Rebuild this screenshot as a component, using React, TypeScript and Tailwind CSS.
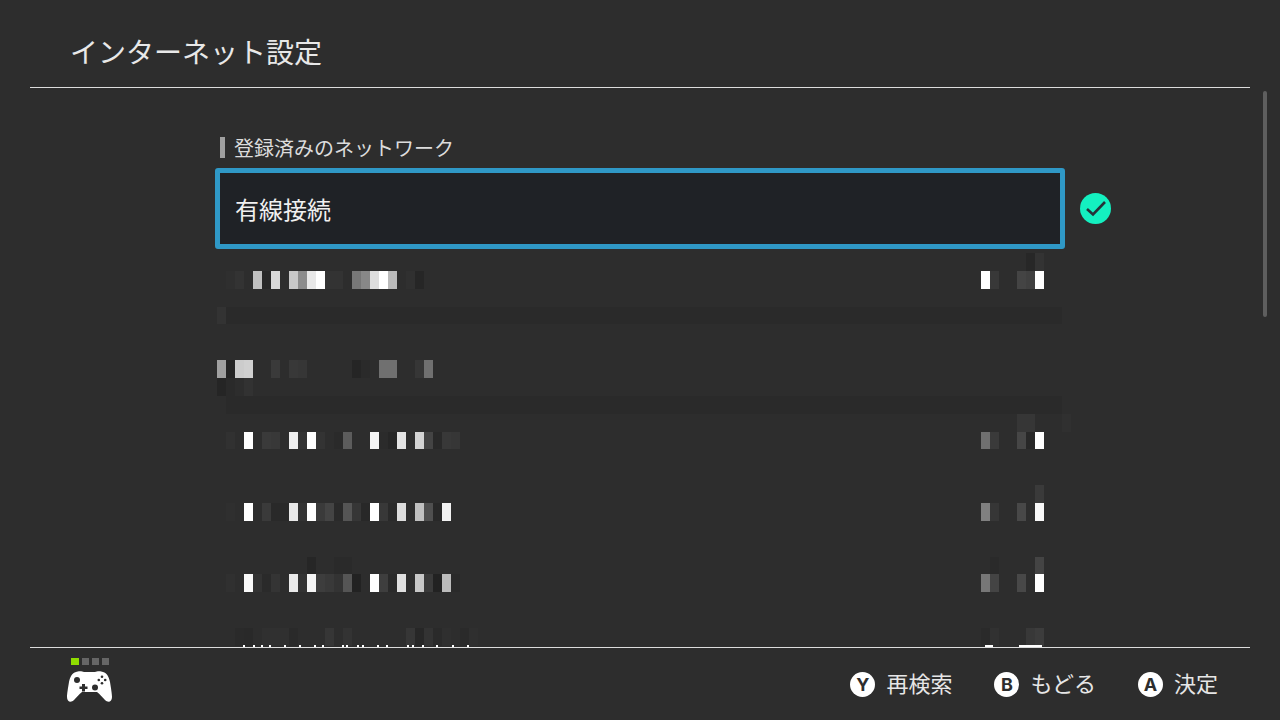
const JP = 'font-["Noto_Sans_CJK_JP","Noto_Sans",sans-serif]'

/* ── Pixelated list area ───────────────────────── */
// row index -> [column, grey]
const mosaic: [number, [number, string][]][] = [
  [0, [[90, '#272727'], [91, '#333333']]],
  [1, [[1, '#2f2f2f'], [2, '#333333'], [4, '#c0c0c0'], [5, '#272727'], [6, '#d8d8d8'], [8, '#c8c8c8'], [9, '#8c8c8c'], [10, '#e8e8e8'], [11, '#ffffff'], [12, '#333333'], [13, '#333333'], [15, '#777777'], [16, '#888888'], [17, '#dddddd'], [18, '#ffffff'], [19, '#bbbbbb'], [21, '#303030'], [22, '#262626'], [85, '#ffffff'], [86, '#383838'], [89, '#444444'], [90, '#404040'], [91, '#ffffff']]],
  [3, [[0, '#333333']]],
  [6, [[0, '#a0a0a0'], [1, '#252525'], [2, '#cccccc'], [3, '#d0d0d0'], [6, '#3a3a3a'], [8, '#383838'], [9, '#363636'], [15, '#252525'], [16, '#2a2a2a'], [18, '#707070'], [19, '#707070'], [22, '#363636'], [23, '#707070']]],
  [7, [[0, '#252525'], [1, '#2a2a2a'], [3, '#323232']]],
  [9, [[89, '#363636'], [90, '#363636'], [94, '#303030']]],
  [10, [[1, '#313131'], [3, '#ffffff'], [5, '#3a3a3a'], [6, '#383838'], [8, '#eeeeee'], [9, '#333333'], [10, '#ffffff'], [11, '#333333'], [13, '#2a2a2a'], [14, '#5c5c5c'], [17, '#f5f5f5'], [18, '#2b2b2b'], [19, '#262626'], [20, '#e4e4e4'], [22, '#d4d4d4'], [23, '#444444'], [24, '#292929'], [25, '#383838'], [26, '#363636'], [85, '#707070'], [86, '#3a3a3a'], [89, '#464646'], [90, '#282828'], [91, '#ffffff']]],
  [13, [[91, '#3a3a3a']]],
  [14, [[1, '#2f2f2f'], [3, '#ffffff'], [5, '#3a3a3a'], [6, '#292929'], [7, '#292929'], [8, '#e8e8e8'], [9, '#333333'], [10, '#ffffff'], [11, '#3a3a3a'], [12, '#444444'], [13, '#2a2a2a'], [14, '#555555'], [15, '#363636'], [16, '#282828'], [17, '#ffffff'], [18, '#383838'], [19, '#2a2a2a'], [20, '#dddddd'], [22, '#c0c0c0'], [23, '#4f4f4f'], [24, '#282828'], [25, '#f2f2f2'], [85, '#808080'], [86, '#363636'], [89, '#484848'], [91, '#f8f8f8']]],
  [17, [[10, '#262626'], [13, '#2a2a2a'], [14, '#2a2a2a'], [86, '#2a2a2a'], [91, '#444444']]],
  [18, [[1, '#303030'], [3, '#fafafa'], [4, '#333333'], [5, '#2a2a2a'], [6, '#343434'], [8, '#eaeaea'], [9, '#333333'], [10, '#f5f5f5'], [11, '#3d3d3d'], [12, '#393939'], [13, '#333333'], [14, '#555555'], [15, '#222222'], [17, '#ffffff'], [18, '#3e3e3e'], [19, '#2a2a2a'], [20, '#e0e0e0'], [22, '#c8c8c8'], [23, '#3a3a3a'], [24, '#222222'], [25, '#bbbbbb'], [26, '#2a2a2a'], [85, '#777777'], [86, '#444444'], [89, '#484848'], [91, '#ffffff']]],
  [21, [[2, '#2a2a2a'], [3, '#292929'], [5, '#303030'], [6, '#303030'], [7, '#303030'], [8, '#2a2a2a'], [12, '#363636'], [14, '#333333'], [21, '#363636'], [22, '#272727'], [23, '#333333'], [24, '#2a2a2a'], [25, '#2f2f2f'], [27, '#2a2a2a'], [28, '#2f2f2f'], [85, '#2a2a2a'], [86, '#313131'], [90, '#383838'], [91, '#3c3c3c']]],
]

// bright specks that peek out just above the footer line: [x from grid left, width]
const specks: [number, number][] = [
  [26, 2], [36, 2], [44, 2], [52, 2], [67, 2], [82, 2], [97, 2], [105, 2], [125, 2], [129, 2],
  [140, 2], [145, 2], [160, 2], [169, 2], [190, 2], [195, 2], [205, 2], [219, 2], [235, 2], [250, 2],
  [768, 8], [802, 23],
]

function Mosaic() {
  return (
    <div className="ml-[2px] mt-[4px] grid grid-cols-[repeat(95,8.99px)] auto-rows-[17.86px]">
      <div className="bg-[#2a2a2a] col-start-2 col-end-[95] row-start-4" />
      <div className="bg-[#2a2a2a] col-start-2 col-end-[95] row-start-9" />
      {mosaic.flatMap(([row, cells]) =>
        cells.map(([col, grey]) => (
          <div key={`${row}-${col}`} style={{ gridRow: row + 1, gridColumn: col + 1, backgroundColor: grey }} />
        )),
      )}
      {specks.map(([x, w]) => (
        <div
          key={x}
          className="bg-white h-[2px] -mt-[1px] self-start col-start-1 row-start-[23]"
          style={{ marginLeft: x, width: w }}
        />
      ))}
    </div>
  )
}

/* ── Footer bits ───────────────────────────────── */
function Hint({ letter, label }: { letter: string; label: string }) {
  return (
    <div className="flex items-center gap-[11px]">
      <span className="flex h-[25px] w-[25px] items-center justify-center rounded-full bg-white font-['Inter',sans-serif] text-[18px] font-bold leading-none text-[#2d2d2d]">
        {letter}
      </span>
      <span className="mb-[5px] text-[22px] leading-none text-[#e6e6e6]">{label}</span>
    </div>
  )
}

function Controller() {
  return (
    <div className="flex flex-col items-start gap-[5px]">
      <div className="ml-[4px] flex gap-[3px]">
        <span className="h-[7px] w-[8px] bg-[#8fdc00]" />
        <span className="h-[7px] w-[7px] bg-[#666666]" />
        <span className="h-[7px] w-[7px] bg-[#666666]" />
        <span className="h-[7px] w-[7px] bg-[#666666]" />
      </div>
      <svg width="45" height="33" viewBox="0 0 45 33">
        <path
          fill="#fff"
          d="M9 2C11 1 15 1 17 2H28C30 1 34 1 36 2C40 3 42 7 43 12C44 18 45 24 45 27C45 32 41 33 38 30C35 27 33 24 30 22H15C12 24 10 27 7 30C4 33 0 32 0 27C0 24 1 18 2 12C3 7 5 3 9 2Z"
        />
        <circle cx="10" cy="10" r="3" fill="#2d2d2d" />
        <circle cx="28" cy="17.5" r="3" fill="#2d2d2d" />
        <path fill="#2d2d2d" d="M15 14H18V16.5H20.5V19H18V21.5H15V19H12.5V16.5H15Z" />
        <circle cx="35" cy="6.8" r="1.3" fill="#2d2d2d" />
        <circle cx="35" cy="13.2" r="1.3" fill="#2d2d2d" />
        <circle cx="31.8" cy="10" r="1.3" fill="#2d2d2d" />
        <circle cx="38.2" cy="10" r="1.3" fill="#2d2d2d" />
      </svg>
    </div>
  )
}

export default function App() {
  return (
    <div className={`relative flex h-[720px] w-[1280px] flex-col overflow-hidden bg-[#2d2d2d] ${JP}`}>
      <header className="mx-[30px] flex h-[88px] shrink-0 items-center border-b border-[#dcdcdc] pt-[15px] pl-[40px]">
        <h1 className="text-[28px] font-normal leading-none text-[#e8e8e8]">インターネット設定</h1>
      </header>

      <main className="min-h-0 flex-1 overflow-hidden pl-[215px] pt-[49px]">
        <div className="ml-[5px] flex h-[21px] items-center gap-[9px]">
          <span className="h-[21px] w-[5px] bg-[#a0a0a0]" />
          <span className="text-[20px] leading-none text-[#dcdcdc]">登録済みのネットワーク</span>
        </div>
        <div className="mt-[10px] flex items-center">
          <div className="flex h-[81px] w-[850px] items-center rounded-[3px] border-[5px] border-[#2f98c6] bg-[#1f2226] pl-[15px]">
            <span className="text-[24px] leading-none text-[#f0f0f0]">有線接続</span>
          </div>
          <span className="ml-[15px] flex h-[31px] w-[31px] items-center justify-center rounded-full bg-[#14f0c0]">
            <svg width="23" height="19" viewBox="0 0 23 19" fill="none" stroke="#263238" strokeWidth="2.6">
              <path d="M3 10L9 15.5L21 3" />
            </svg>
          </span>
        </div>
        <Mosaic />
      </main>

      {/* scrollbar thumb */}
      <div className="absolute left-[1263px] top-[91px] h-[226px] w-[4px] rounded-full bg-[#5e5e5e]" />

      <footer className="mx-[30px] flex h-[73px] shrink-0 items-start justify-between border-t border-[#dcdcdc] pl-[37px] pr-[32px]">
        <div className="pt-[10px]">
          <Controller />
        </div>
        <div className="flex gap-[42px] pt-[23px]">
          <Hint letter="Y" label="再検索" />
          <Hint letter="B" label="もどる" />
          <Hint letter="A" label="決定" />
        </div>
      </footer>
    </div>
  )
}
